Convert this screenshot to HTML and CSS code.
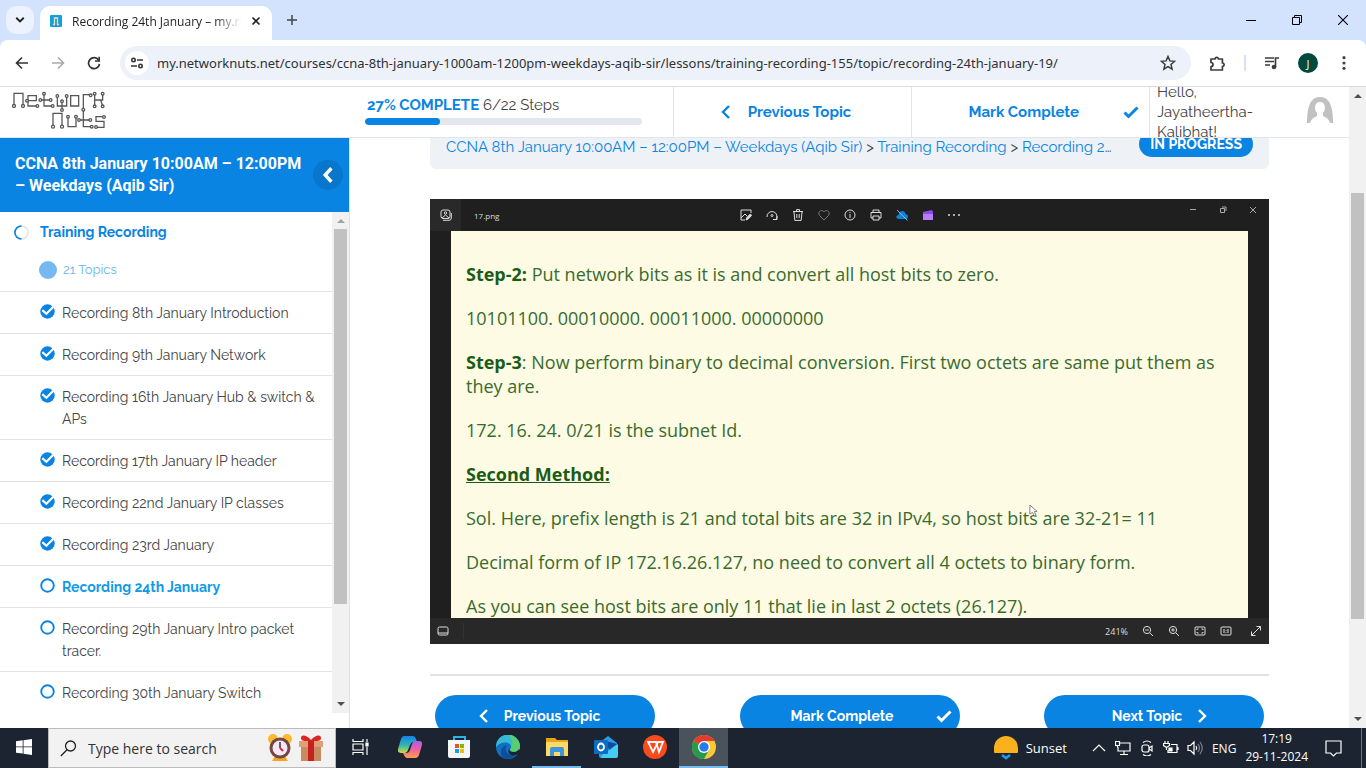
FILE: index.html
```html
<!DOCTYPE html>
<html lang="en">
<head>
<meta charset="utf-8">
<meta name="viewport" content="width=device-width, initial-scale=1">
<title>Recording 24th January – my.networknuts.net</title>
<link rel="stylesheet" href="styles.css">
</head>
<body>
<svg class="sprite" aria-hidden="true">
  <symbol id="left" viewBox="0 0 16 16"><path d="M11 2 5 8l6 6" fill="none" stroke="currentColor" stroke-width="2.4"/></symbol>
  <symbol id="right" viewBox="0 0 16 16"><path d="m5 2 6 6-6 6" fill="none" stroke="currentColor" stroke-width="2.4"/></symbol>
  <symbol id="check" viewBox="0 0 16 16"><path d="m1.500 8.500 4 4 9-9" fill="none" stroke="currentColor" stroke-width="3"/></symbol>
  <symbol id="done" viewBox="0 0 16 16"><circle cx="8" cy="8" r="7.700" fill="#0984e3"/><path d="m2.500 6.500 4.300 4 8-8" fill="none" stroke="#fff" stroke-width="2.300"/></symbol>
  <symbol id="todo" viewBox="0 0 16 16"><circle cx="8" cy="8" r="6.700" fill="none" stroke="#0984e3" stroke-width="2"/></symbol>
</svg>

<header class="browser">
  <div class="tabstrip">
    <button class="tab-search" aria-label="Search tabs"><svg viewBox="0 0 16 16" width="12" height="12"><path d="m3 5 5 5 5-5" fill="none" stroke="#1f1f1f" stroke-width="2.400"/></svg></button>
    <div class="tab">
      <svg viewBox="0 0 12 12" width="12" height="12"><rect width="12" height="12" rx="1" fill="#12a0e0"/><path d="M3 9.500h1.500V3h3v6.500H9" fill="none" stroke="#f6dcae" stroke-width="1.300"/></svg>
      <span class="tab-title">Recording 24th January – my.networknuts.net</span>
      <button class="plain" aria-label="Close tab"><svg viewBox="0 0 10 10" width="10" height="10"><path d="m1.500 1.500 7 7m0-7-7 7" stroke="#222" stroke-width="1.600"/></svg></button>
    </div>
    <button class="plain new-tab" aria-label="New tab"><svg viewBox="0 0 12 12" width="12" height="12"><path d="M6 1v10M1 6h10" stroke="#444" stroke-width="1.500"/></svg></button>
    <div class="window-controls">
      <button class="plain" aria-label="Minimize"><svg viewBox="0 0 10 10" width="10" height="10"><path d="M0 5.500h10" stroke="#000"/></svg></button>
      <button class="plain" aria-label="Restore"><svg viewBox="0 0 10 10" width="10" height="10"><path d="M.5 2.500h7v7h-7zM2.500 2.500v-2h7v7h-2" fill="none" stroke="#000"/></svg></button>
      <button class="plain" aria-label="Close"><svg viewBox="0 0 10 10" width="10" height="10"><path d="m0 0 10 10M10 0 0 10" stroke="#000" stroke-width="1.100"/></svg></button>
    </div>
  </div>
  <div class="toolbar">
    <div class="nav-buttons">
      <button class="plain" aria-label="Back"><svg viewBox="0 0 14 14" width="14" height="14"><path d="M13 7H2m5-5.500L1.500 7 7 12.500" fill="none" stroke="#333" stroke-width="1.600"/></svg></button>
      <button class="plain" aria-label="Forward"><svg viewBox="0 0 14 14" width="14" height="14"><path d="M1 7h11M7 1.500 12.500 7 7 12.500" fill="none" stroke="#aaa" stroke-width="1.600"/></svg></button>
      <button class="plain" aria-label="Reload"><svg viewBox="0 0 14 14" width="14" height="14"><path d="M12.500 8A5.500 5.500 0 1 1 11.600 4" fill="none" stroke="#333" stroke-width="1.700"/><path d="M13 .8v5H8V4.300h3.400V.8z" fill="#333"/></svg></button>
    </div>
    <div class="address">
      <span class="site-info"><svg viewBox="0 0 14 14" width="14" height="14"><g fill="none" stroke="#333" stroke-width="1.600"><circle cx="3.500" cy="4" r="1.700"/><path d="M7 4h6M1 10h6"/><circle cx="10.500" cy="10" r="1.700"/></g></svg></span>
      <input class="url" type="text" aria-label="Address" value="my.networknuts.net/courses/ccna-8th-january-1000am-1200pm-weekdays-aqib-sir/lessons/training-recording-155/topic/recording-24th-january-19/">
      <button class="plain" aria-label="Bookmark"><svg viewBox="0 0 16 16" width="16" height="16"><path d="m8 1.500 1.900 4.400 4.700.4-3.600 3.100 1.100 4.700L8 11.600l-4.100 2.500L5 9.400 1.400 6.300l4.700-.4z" fill="none" stroke="#3c3c3c" stroke-width="1.500"/></svg></button>
    </div>
    <button class="plain" aria-label="Extensions"><svg viewBox="0 0 17 17" width="17" height="17"><path d="M2 4h4a1.700 1.700 0 1 1 3.400 0h4v4a1.700 1.700 0 1 1 0 3.400V15H2v-3.500a2 2 0 1 0 0-4z" fill="none" stroke="#3c3c3c" stroke-width="1.700" stroke-linejoin="round"/></svg></button>
    <span class="toolbar-rule"></span>
    <button class="plain" aria-label="Media controls"><svg viewBox="0 0 16 14" width="16" height="14"><path d="M1 2h9M1 5.500h9M1 9h5" stroke="#3c3c3c" stroke-width="1.600"/><path d="M11.500 11V2H15" fill="none" stroke="#3c3c3c" stroke-width="1.700"/><circle cx="10" cy="11" r="2.300" fill="#3c3c3c"/></svg></button>
    <button class="profile" aria-label="Profile">J</button>
    <button class="plain" aria-label="Menu"><svg viewBox="0 0 4 14" width="4" height="14"><g fill="#444"><circle cx="2" cy="1.700" r="1.600"/><circle cx="2" cy="7" r="1.600"/><circle cx="2" cy="12.300" r="1.600"/></g></svg></button>
  </div>
</header>

<div class="viewport">
  <div class="page">
    <header class="course-header">
      <a class="logo" href="#" aria-label="Network Nuts">
        <svg viewBox="30 270 291 120" width="97" height="40" fill="none" stroke="#555" stroke-width="3.800">
          <path d="M42 315v-35h27v35M112 318H84v-31h25v15H82M132 282v36h25M120 300h30M172 290v28h28v-28M186 300v28M212 287h24v31h-24zM250 326v-42h22M284 284v34M308 282v18h-24m18 0 6 18M159 378v-38h27v38M204 352v28h24v-28M250 332v48h24M236 360h33M312 350h-24v14h24v18h-24"/>
          <g fill="#fff"><circle cx="42" cy="318" r="4.500"/><circle cx="69" cy="318" r="4.500"/><circle cx="81" cy="302" r="4"/><circle cx="112" cy="318" r="4"/><circle cx="132" cy="281" r="4"/><circle cx="121" cy="300" r="4"/><circle cx="152" cy="300" r="4"/><circle cx="158" cy="318" r="4"/><circle cx="172" cy="288" r="4"/><circle cx="200" cy="288" r="4"/><circle cx="186" cy="304" r="4"/><circle cx="186" cy="330" r="4"/><circle cx="272" cy="286" r="4"/><circle cx="284" cy="281" r="4"/><circle cx="308" cy="281" r="4"/><circle cx="308" cy="319" r="4"/><circle cx="284" cy="319" r="4"/><circle cx="159" cy="380" r="4.500"/><circle cx="186" cy="380" r="4.500"/><circle cx="204" cy="350" r="4"/><circle cx="228" cy="350" r="4"/><circle cx="237" cy="360" r="4"/><circle cx="250" cy="329" r="4"/><circle cx="271" cy="360" r="4"/><circle cx="275" cy="380" r="4"/><circle cx="312" cy="351" r="4"/><circle cx="288" cy="381" r="4"/></g>
        </svg>
      </a>
      <div class="progress">
        <label class="progress-label" for="course-progress"><b>27% COMPLETE</b> 6/22 Steps</label>
        <progress class="progress-bar" id="course-progress" value="27" max="100"></progress>
      </div>
      <a class="head-link" href="#"><svg class="icon"><use href="#left"/></svg>Previous Topic</a>
      <button class="head-link mark">Mark Complete<svg class="icon"><use href="#check"/></svg></button>
      <div class="user">
        <span class="hello">Hello, Jayatheertha-Kalibhat!</span>
        <svg viewBox="0 0 26 30" width="26" height="30"><path d="M0 26C0 8 4 0 13 0s13 8 13 26z" fill="#c1c1c1"/><path d="M3 26c1-4 4-6 7-7V16C7 13 7 5 13 5s6 8 3 11v3c3 1 6 3 7 7z" fill="#fff"/></svg>
      </div>
    </header>

    <div class="course">
      <aside class="sidebar">
        <div class="course-title">
          <h2>CCNA 8th January 10:00AM – 12:00PM – Weekdays (Aqib Sir)</h2>
          <button class="collapse" aria-label="Collapse"><svg viewBox="0 0 16 16" width="18" height="18"><path d="M11 2 5.500 8l5.500 6" fill="none" stroke="#fff" stroke-width="3"/></svg></button>
        </div>
        <div class="lessons">
          <nav class="lesson-list" aria-label="Lessons">
            <a class="lesson" href="#"><svg viewBox="0 0 16 16" width="15" height="15" fill="none" stroke-width="1.700"><circle cx="8" cy="8" r="7" stroke="#dfe4ec"/><path d="M8 1a7 7 0 0 0 0 14" stroke="#0984e3"/></svg>Training Recording</a>
            <div class="topic-count"><span class="dot"></span>21 Topics</div>
            <a class="topic" href="#"><svg class="state"><use href="#done"/></svg><span>Recording 8th January Introduction</span></a>
            <a class="topic" href="#"><svg class="state"><use href="#done"/></svg><span>Recording 9th January Network</span></a>
            <a class="topic" href="#"><svg class="state"><use href="#done"/></svg><span>Recording 16th January Hub &amp; switch &amp; APs</span></a>
            <a class="topic" href="#"><svg class="state"><use href="#done"/></svg><span>Recording 17th January IP header</span></a>
            <a class="topic" href="#"><svg class="state"><use href="#done"/></svg><span>Recording 22nd January IP classes</span></a>
            <a class="topic" href="#"><svg class="state"><use href="#done"/></svg><span>Recording 23rd January</span></a>
            <a class="topic current" href="#"><svg class="state"><use href="#todo"/></svg><span>Recording 24th January</span></a>
            <a class="topic" href="#"><svg class="state"><use href="#todo"/></svg><span>Recording 29th January Intro packet tracer.</span></a>
            <a class="topic" href="#"><svg class="state"><use href="#todo"/></svg><span>Recording 30th January Switch</span></a>
          </nav>
          <div class="scrollbar side-scroll"><i class="up dim"></i><i class="thumb"></i><i class="down"></i></div>
        </div>
      </aside>

      <main class="content">
        <div class="crumbs">
          <nav class="crumb-path" aria-label="Breadcrumb"><a href="#">CCNA 8th January 10:00AM – 12:00PM – Weekdays (Aqib Sir)</a> &gt; <a href="#">Training Recording</a> &gt; <a href="#">Recording 24th January</a></nav>
          <span class="badge">IN PROGRESS</span>
        </div>

        <section class="viewer">
          <div class="viewer-top">
            <div class="file"><span class="file-icon"><svg viewBox="0 0 12 12" width="12" height="12" fill="none" stroke="#ddd"><rect x="1" y="1" width="9" height="8.500" rx="2"/><circle cx="5.500" cy="4" r="1.200"/><path d="m2 9 3.500-3L9 9M3 11.300h6q2.300 0 2.300-2.300V4"/></svg></span><span class="file-name">17.png</span></div>
            <div class="tools">
              <svg viewBox="0 0 12 12"><path d="M11 4V1H1v10h4M1 9l4-4 2 2"/><path d="m6 11 .7-2.300L10.300 5l1.400 1.400L8.200 10z" fill="#ddd"/></svg>
              <svg viewBox="0 0 12 12"><path d="M1 8a5 5 0 1 1 9 2.500M7 10.500h4v-3.500"/><circle cx="6" cy="6.500" r="1"/></svg>
              <svg viewBox="0 0 12 12"><path d="M1 2.500h10M4.500 2V.6h3V2M2 3l.8 8.400h6.400L10 3M4.800 5v4M7.200 5v4"/></svg>
              <svg viewBox="0 0 12 12" class="faint"><path d="M6 11 1.500 6.500C-1 3 3.500-.5 6 3c2.500-3.500 7 0 4.500 3.500z"/></svg>
              <svg viewBox="0 0 12 12"><circle cx="6" cy="6" r="5"/><path d="M6 5v4M6 3v1"/></svg>
              <svg viewBox="0 0 12 12"><path d="M3 3V1h6v2M3 9H1V3.500h10V9H9M3 7h6v4H3z"/></svg>
              <svg viewBox="0 0 12 12"><path d="M3 10C-1 10 0 6 2.500 6 3 1 9 1 9.500 5c3 0 3.500 5 0 5z" fill="#0a84d8" stroke="none"/><path d="m1 1 10.500 10.500" stroke="#88bbdc"/></svg>
              <svg viewBox="0 0 12 12"><path d="m1 3 9-2 1 2v8H1z" fill="#8a4cf0" stroke="none"/><path d="M1 5h10v6H1z" fill="#b77cf8" stroke="none"/></svg>
              <svg viewBox="0 0 12 12"><g fill="#ddd" stroke="none"><circle cx="1" cy="6" r="1"/><circle cx="6" cy="6" r="1"/><circle cx="11" cy="6" r="1"/></g></svg>
            </div>
            <div class="viewer-controls">
              <svg viewBox="0 0 8 8"><path d="M1 3.500h6"/></svg>
              <svg viewBox="0 0 8 8"><path d="M1.500 2.500h4v4h-4zM3 1h4v4"/></svg>
              <svg viewBox="0 0 8 8"><path d="m1 1 6 6m0-6L1 7"/></svg>
            </div>
          </div>
          <div class="slide">
            <p><b>Step-2:</b> Put network bits as it is and convert all host bits to zero.</p>
            <p>10101100. 00010000. 00011000. 00000000</p>
            <p><b>Step-3</b>: Now perform binary to decimal conversion. First two octets are same put them as they are.</p>
            <p>172. 16. 24. 0/21 is the subnet Id.</p>
            <p><b class="under">Second Method:</b></p>
            <p>Sol. Here, prefix length is 21 and total bits are 32 in IPv4, so host bits are 32-21= 11</p>
            <p>Decimal form of IP 172.16.26.127, no need to convert all 4 octets to binary form.</p>
            <p>As you can see host bits are only 11 that lie in last 2 octets (26.127).</p>
            <svg class="pointer" viewBox="0 0 10 14" width="9" height="13"><path d="M1 1v10l3-2 2 4 1.500-1L6 8h3z"/></svg>
          </div>
          <div class="viewer-bottom">
            <svg class="film" viewBox="0 0 12 10"><rect x="1" y="1" width="10" height="8" rx="1.500"/><path d="M1 7h10"/></svg>
            <span class="bar-rule"></span>
            <span class="zoom">241%</span>
            <svg viewBox="0 0 12 12"><circle cx="5" cy="5" r="3.600"/><path d="m8 8 3 3M3.300 5h3.400"/></svg>
            <svg viewBox="0 0 12 12"><circle cx="5" cy="5" r="3.600"/><path d="m8 8 3 3M3.300 5h3.400M5 3.300v3.400"/></svg>
            <svg viewBox="0 0 12 12"><rect x="1" y="2" width="10" height="8" rx="1"/><path d="M3 5V4h1.500M7.500 4H9v1M9 7v1H7.500M4.500 8H3V7"/></svg>
            <svg viewBox="0 0 12 12"><rect x="1" y="2" width="10" height="8" rx="1"/><path d="M4 4v4M8 4v4M6 5v.8M6 7v.8"/></svg>
            <svg class="expand" viewBox="0 0 12 12"><path d="M1.500 10.500l9-9M6.500 1.500h4v4M1.500 6.500v4h4"/></svg>
          </div>
        </section>

        <div class="topic-actions">
          <a class="pill pill-prev" href="#"><svg class="icon"><use href="#left"/></svg>Previous Topic</a>
          <button class="pill pill-mark">Mark Complete<svg class="icon"><use href="#check"/></svg></button>
          <a class="pill pill-next" href="#">Next Topic<svg class="icon"><use href="#right"/></svg></a>
        </div>
      </main>
    </div>
  </div>
  <div class="scrollbar page-scroll"><i class="up"></i><i class="thumb"></i><i class="down"></i></div>
</div>

<footer class="taskbar">
  <button class="task start" aria-label="Start"><svg viewBox="0 0 16 16" width="16" height="16" fill="#fff"><path d="M0 2.200 6.700 1.300v6.200H0zM7.500 1.200 16 0v7.500H7.500zM0 8.300h6.700v6.300L0 13.700zM7.500 8.300H16V16l-8.500-1.200z"/></svg></button>
  <div class="search">
    <svg viewBox="0 0 17 17" width="17" height="17" fill="none" stroke="#222" stroke-width="1.300"><circle cx="10.500" cy="6" r="5"/><path d="M7 9.800.8 16"/></svg>
    <input type="text" aria-label="Search" placeholder="Type here to search">
    <svg viewBox="0 0 26 30" width="26" height="30"><circle cx="6" cy="6" r="5" fill="#fbb930"/><circle cx="20" cy="6" r="5" fill="#fbb930"/><path d="m5 28 3-5h10l3 5z" fill="#f5a524"/><circle cx="13" cy="15" r="10.500" fill="#79453f"/><circle cx="13" cy="15" r="7.500" fill="#f1e9f6"/><path d="M13 9v6" stroke="#333" stroke-width="1.500"/><path d="m13 15 3 3" stroke="#e81e4e" stroke-width="2"/></svg>
    <svg viewBox="0 0 24 28" width="24" height="28"><path d="M2 12h20v15H2z" fill="#c98a61"/><path d="M0 7h24v6H0z" fill="#dda078"/><path d="M9 7h6v20H9z" fill="#c9201f"/><path d="M12 7C8 7 2 8 2 4s6-3 10 2c4-5 10-6 10-2s-6 3-10 3" fill="#dc2626"/></svg>
  </div>
  <button class="task" aria-label="Task view"><svg viewBox="0 0 17 16" width="17" height="16" fill="none" stroke="#fff" stroke-width="1.200"><path d="M1 0v2.500h10V0M1 5h10v6H1zM1 16v-2.500h10V16M15 0v3M15 8v8"/><path d="M14 4h2v3h-2z" fill="#fff"/></svg></button>
  <button class="task" aria-label="Copilot"><svg viewBox="0 0 24 22" width="24" height="22"><path d="M6 0h9q2 0 3 3l1 3h-4q-2 0-3 3l-2 5q-1 3-3 3H3q-4 0-3-4L3 3q1-3 3-3" fill="url(#cool)"/><path d="M18 22H9q-2 0-3-3l-1-2h4q2 0 3-3l2-6q1-3 3-3h4q4 0 3 4l-3 10q-1 3-3 3" fill="url(#warm)"/><defs><linearGradient id="cool" x2="0" y2="1"><stop stop-color="#1484e8"/><stop offset=".55" stop-color="#31b7b4"/><stop offset="1" stop-color="#d7d83c"/></linearGradient><linearGradient id="warm" x2="0" y2="1"><stop stop-color="#a95cf0"/><stop offset=".5" stop-color="#f0609c"/><stop offset="1" stop-color="#fba14c"/></linearGradient></defs></svg></button>
  <button class="task" aria-label="Store"><svg viewBox="0 0 24 24" width="24" height="24"><path d="M7 6V2h11v4" fill="none" stroke="#2bb3ea" stroke-width="2"/><path d="M1 5h22v16q0 2-2 2H3q-2 0-2-2z" fill="#f5f6f8"/><path d="M8 9h4v4H8z" fill="#f25022"/><path d="M13 9h4v4h-4z" fill="#7fba00"/><path d="M8 14h4v4H8z" fill="#00a4ef"/><path d="M13 14h4v4h-4z" fill="#ffb900"/></svg></button>
  <button class="task" aria-label="Edge"><svg viewBox="0 0 24 24" width="24" height="24"><circle cx="12" cy="12" r="12" fill="#126fc4"/><path d="M0 12A12 12 0 0 1 24 11c0 4-3 6-6 6-4 0-5-2-3-4 1-6-9-8-15-1" fill="#36b9d5"/><path d="M12 0a12 12 0 0 1 12 11c0 4-3 6-6 6-4 0-5-2-3-4 2-5 2-9-3-13" fill="#57cf70"/><path d="M11 10c-4 6 1 12 9 9-3 5-8 5-12 4-5-3-4-11 3-13" fill="#0c4f96"/><path d="M14 13c-2 2 0 4 4 4 2 0 4-1 5-3l1 4-4 2c-6 2-10-4-6-7" fill="#1b2430"/></svg></button>
  <button class="task open" aria-label="File Explorer"><svg viewBox="0 0 22 20" width="22" height="20"><path d="M0 1h9l2 2h11v16H0z" fill="#e6a51b"/><path d="M0 5h22v14H0z" fill="#ffd868"/><path d="M4 12q0-2 2-2h10q2 0 2 2v7h-4v-4H8v4H4z" fill="#3c96dd"/></svg></button>
  <button class="task" aria-label="Outlook"><svg viewBox="0 0 24 24" width="24" height="24"><path d="m5 8 9-7 9 7v13q0 2-2 2H7q-2 0-2-2z" fill="#2a9be6"/><path d="m8 20 16-11v12q0 2-2 2H7z" fill="#43cdf5"/><path d="m12 6 11 3-8 6z" fill="#0c4da0"/><rect y="5" width="14" height="14" rx="1" fill="#0e6cc4"/><ellipse cx="7" cy="12" rx="3" ry="3.500" fill="none" stroke="#fff" stroke-width="1.800"/></svg></button>
  <button class="task" aria-label="WPS Office"><svg viewBox="0 0 24 24" width="24" height="24"><circle cx="12" cy="12" r="12" fill="#fb4a1c"/><path d="M5 7h8l3 10 4-10h-5l-5 10z" fill="none" stroke="#fff" stroke-width="1.800"/></svg></button>
  <button class="task open active" aria-label="Chrome"><svg viewBox="0 0 24 24" width="24" height="24"><circle cx="12" cy="12" r="12" fill="#fcc934"/><path d="M12 12 1.600 6A12 12 0 0 0 12 24l5-9z" fill="#249b4d"/><path d="M12 12 1.600 6a12 12 0 0 1 20.800 0H12z" fill="#e33b2e"/><circle cx="12" cy="12" r="6" fill="#fff"/><circle cx="12" cy="12" r="4.700" fill="#267be9"/></svg></button>
  <div class="tray">
    <button class="weather"><svg viewBox="0 0 24 24" width="24" height="24"><path d="M0 16V12a12 12 0 0 1 24 0v4q0 1-1 1H1q-1 0-1-1" fill="#f9b21c"/><path d="m8 19 4 3 4-3" fill="none" stroke="#1f9be8" stroke-width="2.600"/></svg>Sunset</button>
    <div class="tray-icons">
      <svg viewBox="0 0 16 16"><path d="m2 11 6-6 6 6"/></svg>
      <svg viewBox="0 0 16 16"><path d="M5 3h10v8H3V7M9 11v3M5 14.500h8M.5 1.500h4v4h-4zM2.500 5.500v2"/></svg>
      <svg viewBox="0 0 16 16"><rect x="3" y="5" width="7" height="7" rx="2"/><path d="m10 8 3-2v5l-3-2M4 2.500Q8-.5 12 2.500M4 14.500q4 3 8 0"/></svg>
      <svg viewBox="0 0 16 16"><path d="M8 4.500h6v8H5V10M15 7v3M2 1v2.500M5 1v2.500M.5 3.500h6v2l-3 2-3-2zM3.500 7v3"/><path d="M6 8h3v3H6z" fill="#fff"/></svg>
      <svg viewBox="0 0 16 16"><path d="M1 5.500h2.500L7 2v12l-3.500-3.500H1zM9 6q1.500 2 0 4"/><path d="M11 4q3 4 0 8M13 2q4.500 6 0 12" stroke="#7c858e"/></svg>
    </div>
    <span class="lang">ENG</span>
    <div class="clock"><time>17:19</time><time>29-11-2024</time></div>
    <button class="plain notices" aria-label="Notifications"><svg viewBox="0 0 17 17" width="17" height="17" fill="none" stroke="#fff" stroke-width="1.200"><path d="M1 1h15v12h-4.500L8.500 16l-3-3H1z"/></svg></button>
    <span class="desktop-edge"></span>
  </div>
</footer>
</body>
</html>
```
FILE: styles.css
```css
* { box-sizing: border-box; }
body {
  margin: 0;
  height: 100vh;
  display: flex;
  flex-direction: column;
  overflow: hidden;
  background: #fff;
  color: #444;
  font-family: Raleway, Lato, sans-serif;
  font-size: 15px;
}
a { color: #0984e3; text-decoration: none; }
button, input { font: inherit; border: 0; }
svg { flex: none; display: block; }
.sprite { display: none; }
.plain { display: flex; padding: 0; background: none; }
.icon { width: 16px; height: 16px; }

/* Browser frame */
.browser {
  flex: none;
  font-family: "Segoe UI", "Open Sans", sans-serif;
  background: #d3e3fd;
}
.tabstrip { display: flex; align-items: center; height: 40px; padding-left: 6px; }
.tab-search {
  display: grid;
  place-items: center;
  width: 28px;
  height: 28px;
  padding: 0;
  border-radius: 10px;
  background: #ecf2fe;
}
.tab {
  align-self: flex-end;
  display: flex;
  align-items: center;
  gap: 10px;
  width: 232px;
  height: 34px;
  margin-left: 6px;
  padding: 0 11px 4px 10px;
  border-radius: 10px 10px 0 0;
  background: #fff;
}
.tab-title {
  flex: 1;
  overflow: hidden;
  white-space: nowrap;
  font-size: 12px;
  color: #1f1f1f;
  mask-image: linear-gradient(to right, #000 85%, transparent);
}
.new-tab { margin-left: 14px; }
.window-controls { display: flex; gap: 36px; margin-left: auto; padding-right: 18px; }
.toolbar {
  display: flex;
  align-items: center;
  height: 47px;
  padding: 0 20px 0 15px;
  border-bottom: 1px solid #dadce0;
  border-radius: 8px 8px 0 0;
  background: #fff;
}
.nav-buttons { display: flex; gap: 22px; margin-right: 19px; }
.address {
  flex: 1;
  display: flex;
  align-items: center;
  height: 34px;
  margin-right: 18px;
  padding: 0 15px 0 5px;
  border-radius: 17px;
  background: #ecf1fa;
}
.site-info {
  display: grid;
  place-items: center;
  width: 24px;
  height: 24px;
  border-radius: 50%;
  background: #fff;
}
.url {
  flex: 1;
  min-width: 0;
  padding: 0 8px;
  background: none;
  color: #303134;
  font-family: "Noto Sans", sans-serif;
  font-size: 13px;
}
.toolbar-rule { width: 2px; height: 16px; margin: 0 18px; background: #d3e3fd; }
.profile {
  width: 20px;
  height: 20px;
  margin: 0 24px 0 18px;
  padding: 0;
  border-radius: 50%;
  background: #00493d;
  color: #fff;
  font-size: 11px;
}

/* Scrollbars */
.viewport { flex: 1; min-height: 0; display: flex; }
.page { flex: 1; min-width: 0; display: flex; flex-direction: column; }
.scrollbar {
  flex: none;
  display: flex;
  flex-direction: column;
  align-items: center;
  width: 17px;
  padding: 7px 0;
  background: #f1f1f1;
}
.up, .down { flex: none; border: 4px solid transparent; }
.up { border-top: 0; border-bottom-color: #505050; }
.down { border-bottom: 0; border-top-color: #505050; margin-top: auto; }
.dim { border-bottom-color: #a3a3a3; }
.thumb { width: 13px; background: #c1c1c1; }
.side-scroll .thumb { height: 77%; margin-top: 6px; }
.page-scroll .thumb { height: 68%; margin-top: 95px; }

/* Course header */
.course-header {
  flex: none;
  display: grid;
  grid-template-columns: 350px 323fr 238fr 238fr 200fr;
  grid-template-rows: 50px;
  height: 51px;
  border-bottom: 1px solid #e2e7ed;
  overflow: hidden;
}
.logo { padding: 3px 10px; }
.progress { padding: 8px 31px 0 15px; }
.progress-label { display: block; padding-left: 2px; line-height: 20px; white-space: nowrap; }
.progress-label b { color: #0984e3; }
.progress-bar {
  display: block;
  appearance: none;
  width: 100%;
  height: 7px;
  margin-top: 3px;
  border-radius: 4px;
  overflow: hidden;
}
.progress-bar::-webkit-progress-bar { background: #e2e7ed; }
.progress-bar::-webkit-progress-value { background: #0984e3; border-radius: 4px; }
.head-link {
  display: flex;
  align-items: center;
  justify-content: center;
  gap: 14px;
  padding: 0 16px 0 0;
  border-left: 1px solid #e2e7ed;
  background: none;
  color: #0984e3;
  font-weight: 700;
}
.mark { justify-content: flex-end; gap: 44px; padding: 0 10px; }
.user {
  display: flex;
  align-items: center;
  justify-content: space-between;
  padding: 0 16px 0 7px;
  border-left: 1px solid #e2e7ed;
  line-height: 20px;
}
.hello { width: 110px; }

/* Sidebar */
.course { flex: 1; min-height: 0; display: flex; }
.sidebar {
  flex: none;
  display: flex;
  flex-direction: column;
  width: 350px;
  padding-bottom: 15px;
  border-right: 1px solid #e2e2e2;
  font-size: 14px;
}
.course-title {
  flex: none;
  display: flex;
  align-items: center;
  justify-content: space-between;
  height: 74px;
  padding: 0 6px 0 15px;
  background: #0984e3;
}
.course-title h2 {
  width: 290px;
  margin: 0;
  color: #fff;
  font: 700 16px/22px Roboto, sans-serif;
}
.collapse {
  display: grid;
  place-items: center;
  width: 30px;
  height: 30px;
  padding: 0;
  border-radius: 50%;
  background: #0876cb;
}
.lessons { flex: 1; min-height: 0; display: flex; }
.lesson-list { flex: 1; overflow: hidden; }
.lesson {
  display: flex;
  align-items: center;
  gap: 11px;
  padding: 9px 14px;
  font-weight: 700;
  line-height: 22px;
}
.topic-count {
  display: flex;
  align-items: center;
  gap: 6px;
  height: 39px;
  padding: 0 39px 4px;
  color: #6cb3ee;
  font-size: 13px;
}
.dot { width: 18px; height: 18px; border-radius: 50%; background: #75b9f0; }
.topic {
  display: flex;
  gap: 7px;
  padding: 10px 8px 9px 40px;
  border-top: 1px solid #e2e2e2;
  color: #444;
  line-height: 22px;
}
.state { width: 15px; height: 15px; margin-top: 2px; }
.current { color: #0f9be6; font-weight: 700; }

/* Content */
.content {
  flex: 1;
  min-width: 0;
  padding: 0 80px;
  overflow: hidden;
}
.crumbs {
  display: flex;
  gap: 20px;
  height: 44px;
  margin-top: -13px;
  padding: 6px 16px;
  border-radius: 6px;
  background: #eef2f6;
}
.crumb-path {
  flex: 1;
  overflow: hidden;
  white-space: nowrap;
  text-overflow: ellipsis;
  line-height: 32px;
}
.badge {
  height: 26px;
  padding: 0 11px;
  border-radius: 13px;
  background: #0984e3;
  color: #fff;
  font-size: 14px;
  font-weight: 700;
  line-height: 26px;
}
.viewer {
  margin-top: 30px;
  background: #1f1f1f;
  color: #ddd;
  font-family: "Open Sans", "Noto Sans", sans-serif;
}
.viewer svg { fill: none; stroke: #ddd; }
.viewer-top { display: grid; grid-template-columns: 1fr auto 1fr; align-items: center; height: 32px; }
.file { display: flex; align-items: center; gap: 13px; align-self: stretch; }
.file-icon { display: grid; place-items: center; width: 31px; height: 32px; background: #292929; }
.file-name { font-size: 8px; }
.tools { display: flex; gap: 14px; }
.tools svg, .viewer-bottom svg { width: 12px; height: 12px; }
.viewer .faint { stroke: #777; }
.viewer-controls { display: flex; gap: 22px; justify-content: flex-end; padding: 0 12px 10px 0; }
.viewer .viewer-controls svg { width: 8px; height: 8px; stroke: #aaa; }
.slide {
  position: relative;
  height: 387px;
  margin: 0 21px;
  padding: 31px 16px 0 15px;
  overflow: hidden;
  background: #fdfbe3;
  color: #3a6b2e;
  font-size: 18px;
  line-height: 24px;
}
.slide p { margin: 0 0 20px; }
.slide b { color: #1c5b16; }
.under { text-decoration: underline; }
.slide .pointer { position: absolute; left: 72.5%; top: 273px; fill: #fff; stroke: #777; }
.viewer-bottom {
  display: flex;
  align-items: center;
  gap: 14px;
  height: 26px;
  padding: 0 7px;
  background: #282828;
}
.bar-rule { width: 1px; height: 16px; background: #333; }
.zoom { margin-left: auto; font-size: 9px; }
.viewer-bottom .expand { margin-left: 4px; }
.topic-actions {
  display: flex;
  justify-content: space-between;
  margin-top: 30px;
  padding: 19px 5px;
  border-top: 2px solid #e2e2e2;
}
.pill {
  display: flex;
  align-items: center;
  justify-content: center;
  gap: 12px;
  width: 220px;
  height: 42px;
  padding: 0 8px;
  border-radius: 21px;
  background: #0984e3;
  color: #fff;
  font-size: 14px;
  font-weight: 700;
}
.pill-prev { padding: 0 14px 0 0; }
.pill-mark { justify-content: flex-end; gap: 42px; }
.pill-next { padding: 0 0 0 14px; }

/* Taskbar */
.taskbar {
  flex: none;
  display: flex;
  height: 40px;
  background: #1b2430;
  color: #fff;
  font-family: "Segoe UI", "Open Sans", sans-serif;
}
.task {
  display: grid;
  place-items: center;
  width: 49px;
  padding: 0;
  border-bottom: 2px solid transparent;
  background: none;
}
.start { width: 48px; }
.open { border-bottom-color: #76b9ed; }
.active { background: #4a525c; }
.search {
  display: flex;
  align-items: center;
  gap: 6px;
  width: 288px;
  padding: 0 12px 0 11px;
  border: 1px solid #bbb;
  background: #f2f2f2;
}
.search input { flex: 1; min-width: 0; padding: 0 5px; background: none; font-size: 14px; }
.search input::placeholder { color: #333; }
.tray { display: flex; align-items: center; margin-left: auto; font-size: 12px; }
.weather {
  display: flex;
  align-items: center;
  gap: 8px;
  padding: 0;
  background: none;
  color: #fff;
  font-size: 13px;
}
.tray-icons { display: flex; gap: 8px; margin: 0 9px 0 24px; }
.tray-icons svg { width: 16px; height: 16px; fill: none; stroke: #fff; stroke-width: 1.2; }
.lang { margin-right: 9px; }
.clock { display: grid; justify-items: center; line-height: 18px; }
.notices { margin: 0 19px 0 17px; }
.desktop-edge { width: 5px; height: 40px; border-left: 1px solid #6b737b; }
```
